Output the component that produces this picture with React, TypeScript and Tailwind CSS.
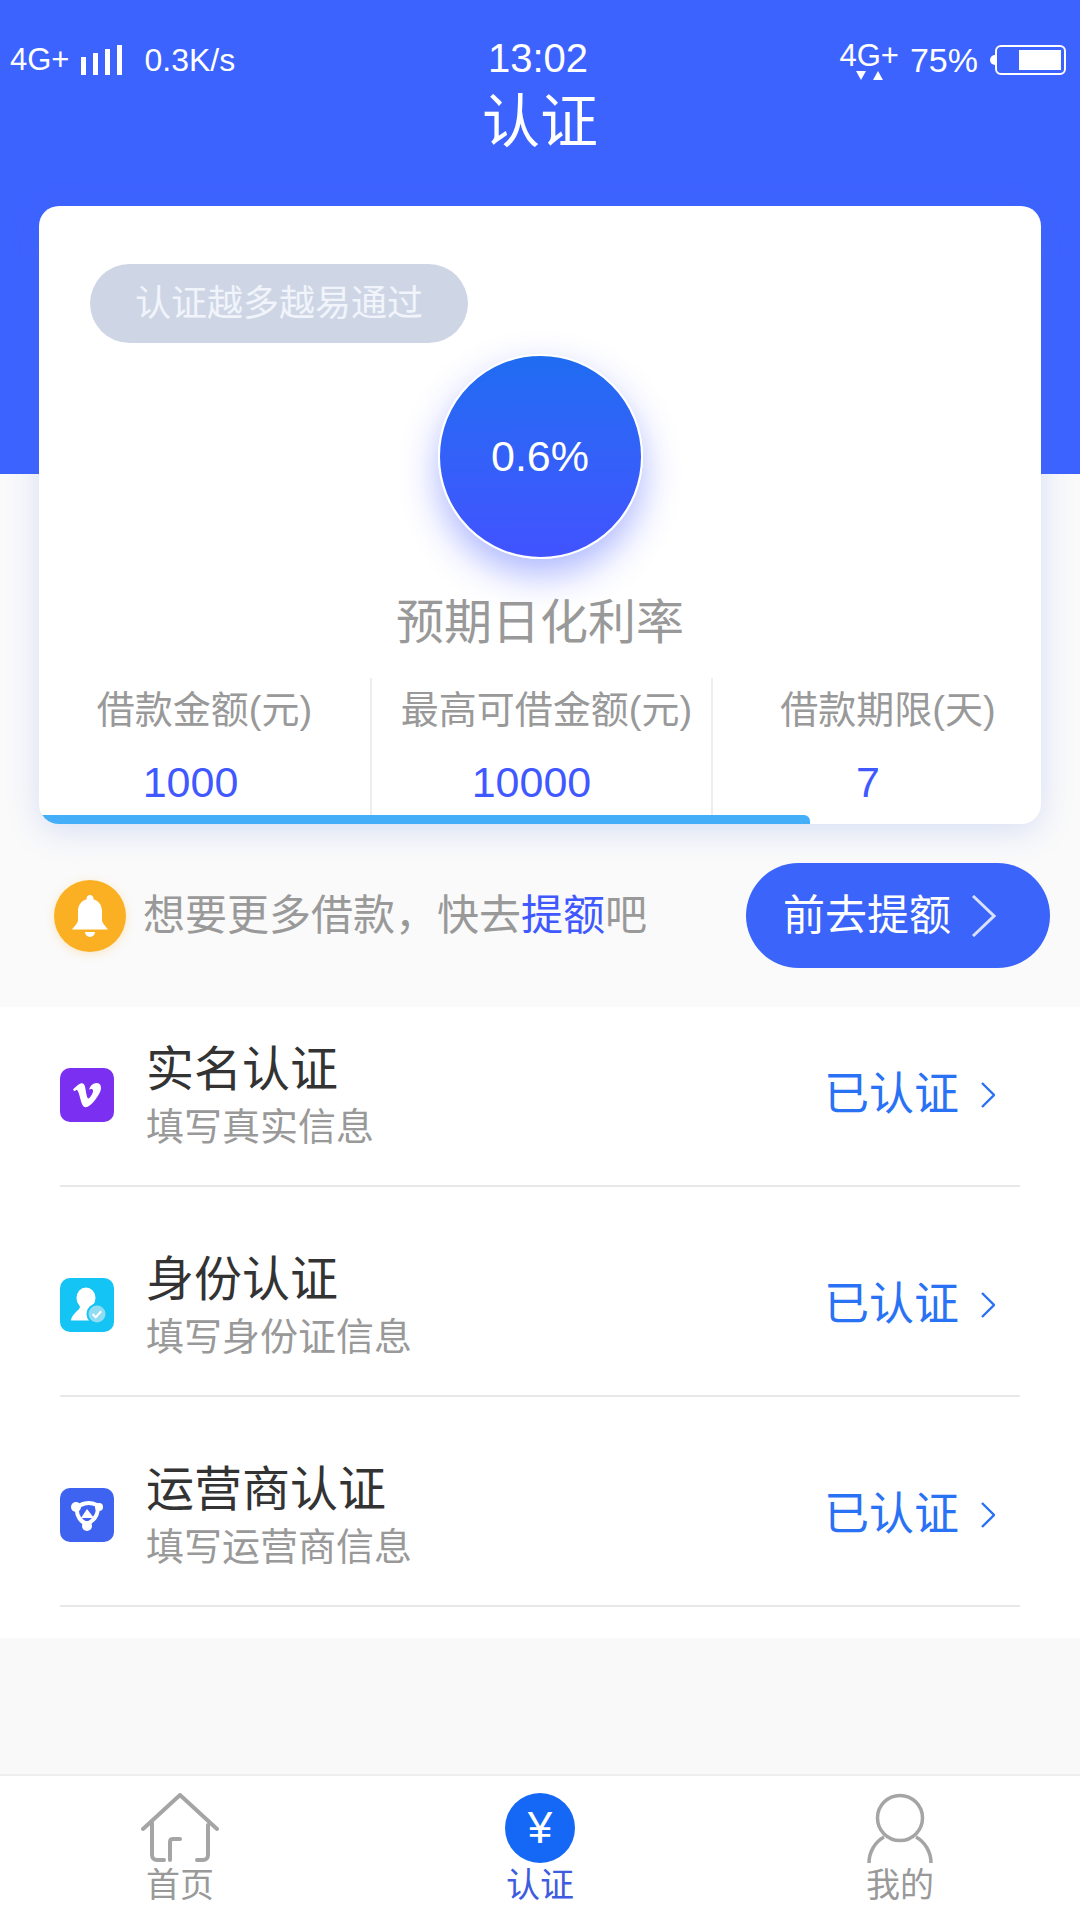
import { FaVimeoV } from "react-icons/fa";

const rows = [
  { title: "实名认证", sub: "填写真实信息", icon: "vimeo" },
  { title: "身份认证", sub: "填写身份证信息", icon: "person" },
  { title: "运营商认证", sub: "填写运营商信息", icon: "share" },
];

function Chevron({ className }: { className: string }) {
  return (
    <svg viewBox="0 0 14 26" fill="none" className={className}>
      <path d="M1 1l12 12L1 25" stroke="currentColor" strokeWidth="2.4" />
    </svg>
  );
}

function StatusBar() {
  return (
    <div className="grid h-[80px] grid-cols-3 items-end pl-[10px] pr-[14px] text-white">
      <div className="flex items-center">
        <span className="text-[31px] leading-[40px]">4G+</span>
        <div className="ml-[12px] flex h-[30px] items-end gap-[7px]">
          <div className="h-[18px] w-[5px] bg-white" />
          <div className="h-[22px] w-[5px] bg-white" />
          <div className="h-[26px] w-[5px] bg-white" />
          <div className="h-[30px] w-[5px] bg-white" />
        </div>
        <span className="ml-[22px] text-[32px] leading-[40px]">0.3K/s</span>
      </div>
      <div className="text-center text-[40px] leading-[44px]">13:02</div>
      <div className="flex items-center justify-end">
        <div className="flex flex-col items-center">
          <span className="text-[31px] leading-[30px]">4G+</span>
          <div className="flex gap-[7px]">
            <div className="h-0 w-0 border-x-[5px] border-t-[9px] border-x-transparent border-t-white" />
            <div className="h-0 w-0 border-x-[5px] border-b-[9px] border-x-transparent border-b-white" />
          </div>
        </div>
        <span className="ml-[11px] text-[34px] leading-[40px]">75%</span>
        <div className="ml-[12px] h-[10px] w-[5px] rounded-l-full bg-white" />
        <div className="flex h-[30px] w-[71px] justify-end rounded-[6px] border-2 border-white p-[3px]">
          <div className="w-[42px] bg-white" />
        </div>
      </div>
    </div>
  );
}

function Stat({ label, value, labelClass, valueClass }: { label: string; value: string; labelClass: string; valueClass: string }) {
  return (
    <div className={"flex flex-col items-center pt-[9px] " + labelClass}>
      <span className="text-[38px] leading-[46px] text-[#999999] whitespace-nowrap">{label}</span>
      <span className={"mt-[24px] text-[43px] leading-[50px] text-[#3f58ff] " + valueClass}>{value}</span>
    </div>
  );
}

function RateCard() {
  return (
    <div className="relative -mt-[268px] mx-[39px] h-[618px] overflow-hidden rounded-[20px] bg-white pt-[58px] shadow-[0_6px_34px_rgba(70,110,225,0.2)]">
      <div className="ml-[51px] flex h-[79px] w-[378px] items-center justify-center rounded-full bg-[#ced6e6] text-[36px] text-[#f1f4fa]">
        认证越多越易通过
      </div>
      <div className="mx-auto mt-[11px] flex h-[205px] w-[205px] items-center justify-center rounded-full border-2 border-white bg-gradient-to-b from-[#1e6cf2] to-[#4153ff] text-[43px] text-white shadow-[0_16px_36px_rgba(61,85,255,0.42)]">
        0.6%
      </div>
      <div className="mt-[32px] text-center text-[48px] leading-[64px] text-[#999999]">预期日化利率</div>
      <div className="mt-[23px] grid h-[144px] grid-cols-[331px_341px_330px]">
        <Stat label="借款金额(元)" value="1000" labelClass="" valueClass="mr-[28px]" />
        <Stat label="最高可借金额(元)" value="10000" labelClass="border-l-2 border-[#eeeeee] pl-[10px]" valueClass="mr-[30px]" />
        <Stat label="借款期限(天)" value="7" labelClass="border-l-2 border-[#eeeeee] pl-[22px]" valueClass="mr-[40px]" />
      </div>
      <div className="absolute bottom-0 left-0 h-[9px] w-[771px] rounded-tr-[6px] bg-[#45aef8]" />
    </div>
  );
}

function TipRow() {
  return (
    <div className="flex flex-1 items-center justify-between pl-[54px] pr-[30px]">
      <div className="flex items-center">
        <div className="flex h-[72px] w-[72px] items-center justify-center rounded-full bg-[#fbb024] shadow-[0_2px_10px_rgba(251,176,36,0.25)]">
          <svg viewBox="0 0 36 42" className="h-[42px] w-[36px]" fill="#ffffff">
            <path d="M18 0a3.5 3.5 0 0 1 3.4 4.2C27 6 30 10.500 30 16v9c0 3 3 5.500 6 9.500H0c3-4 6-6.500 6-9.500v-9c0-5.500 3-10 8.600-11.800A3.500 3.500 0 0 1 18 0z" />
            <path d="M13 37h10a5 5 0 0 1-10 0z" />
          </svg>
        </div>
        <div className="ml-[17px] text-[42px] leading-[56px] text-[#999999]">
          想要更多借款，快去<span className="text-[#3f58ff]">提额</span>吧
        </div>
      </div>
      <div className="flex h-[105px] w-[304px] items-center rounded-full bg-[#3b64fa] pl-[37px] text-[42px] text-white">
        前去提额
        <svg viewBox="0 0 24 42" fill="none" className="ml-[21px] h-[42px] w-[24px]">
          <path d="M1 1l21 20L1 41" stroke="#ffffff" strokeOpacity="0.8" strokeWidth="3" />
        </svg>
      </div>
    </div>
  );
}

function RowIcon({ icon }: { icon: string }) {
  if (icon === "vimeo") {
    return (
      <div className="flex h-[54px] w-[54px] items-center justify-center rounded-[10px] bg-[#7b2ff0]">
        <FaVimeoV className="h-[32px] w-[32px] text-white" />
      </div>
    );
  }
  if (icon === "person") {
    return (
      <div className="flex h-[54px] w-[54px] items-center justify-center rounded-[10px] bg-[#14c4f5]">
        <svg viewBox="0 0 54 54" className="h-[54px] w-[54px]">
          <ellipse cx="26" cy="20" rx="9.500" ry="10.500" fill="#ffffff" />
          <path d="M20 28c0 3-2 4-4.500 6.500C13 37 11 40 11 42.500h28c0-3-3-7-6-9-2-2-3-3.500-3-5.500z" fill="#ffffff" />
          <circle cx="37" cy="36" r="9.500" fill="#8fdcf3" stroke="#14c4f5" strokeWidth="2" />
          <path d="M32.500 36l3.200 3.200 5.500-6" fill="none" stroke="#ffffff" strokeWidth="2" />
        </svg>
      </div>
    );
  }
  return (
    <div className="flex h-[54px] w-[54px] items-center justify-center rounded-[10px] bg-[#3d63f0]">
      <svg viewBox="0 0 54 54" className="h-[54px] w-[54px]" fill="none">
        <path d="M17 20c3-4 11-7 20-3 2 6 0 14-10 19-6-2-11-8-10-16z" stroke="#ffffff" strokeWidth="4" />
        <path d="M27 21l7 9H21z" fill="#ffffff" />
        <circle cx="16" cy="19" r="5" fill="#ffffff" />
        <circle cx="39" cy="19" r="4" fill="#ffffff" />
        <circle cx="27" cy="38" r="5" fill="#ffffff" />
      </svg>
    </div>
  );
}

function AuthList() {
  return (
    <div className="flex flex-col gap-[30px] bg-white pb-[31px]">
      {rows.map((row) => (
        <div key={row.title} className="mx-[60px] flex h-[180px] items-center border-b-2 border-[#e8e8e8] pb-[3px] pr-[25px]">
          <RowIcon icon={row.icon} />
          <div className="ml-[32px] flex-1">
            <div className="text-[48px] leading-[62px] text-[#333333]">{row.title}</div>
            <div className="mt-[2px] text-[38px] leading-[48px] text-[#999999]">{row.sub}</div>
          </div>
          <span className="text-[45px] leading-[60px] text-[#2a72f5]">已认证</span>
          <Chevron className="ml-[22px] h-[26px] w-[14px] text-[#2a72f5]" />
        </div>
      ))}
    </div>
  );
}

function BottomNav() {
  return (
    <div className="grid h-[146px] grid-cols-3 border-t-2 border-[#f0eded] bg-white pt-[17px] text-[34px] leading-[44px] text-[#999999]">
      <div className="flex flex-col items-center">
        <svg viewBox="0 0 78 70" fill="none" className="h-[70px] w-[78px]" stroke="#a5a5a5" strokeWidth="4" strokeLinecap="round" strokeLinejoin="round">
          <path d="M2 36L39 2l37 34" />
          <path d="M11 30v32c0 3 2 5 5 5h7" />
          <path d="M29 67V49c0-2 1-3 3-3h7" />
          <path d="M67 32v30c0 3-2 5-5 5h-6" />
        </svg>
        <span>首页</span>
      </div>
      <div className="flex flex-col items-center text-[#3d5ce0]">
        <div className="flex h-[70px] w-[70px] items-center justify-center rounded-full bg-[#1468f5] text-[44px] text-white">¥</div>
        <span>认证</span>
      </div>
      <div className="flex flex-col items-center">
        <svg viewBox="0 0 66 70" fill="none" className="h-[70px] w-[66px]" stroke="#a5a5a5" strokeWidth="3.500">
          <circle cx="33" cy="25" r="22.500" />
          <path d="M2 70c0-11 6-21 15-26" />
          <path d="M64 70c0-11-6-21-15-26" />
        </svg>
        <span>我的</span>
      </div>
    </div>
  );
}

export default function App() {
  return (
    <div className="flex h-[1920px] w-[1080px] flex-col bg-[#fafafa] font-['Liberation_Sans','Noto_Sans_CJK_SC',sans-serif]">
      <div className="h-[474px] bg-[#3d63ff]">
        <StatusBar />
        <div className="mt-[5px] text-center text-[58px] leading-[74px] text-white">认证</div>
      </div>
      <RateCard />
      <div className="flex h-[183px] flex-col">
        <TipRow />
      </div>
      <AuthList />
      <div className="flex-1 bg-[#f9f9fa]" />
      <BottomNav />
    </div>
  );
}
